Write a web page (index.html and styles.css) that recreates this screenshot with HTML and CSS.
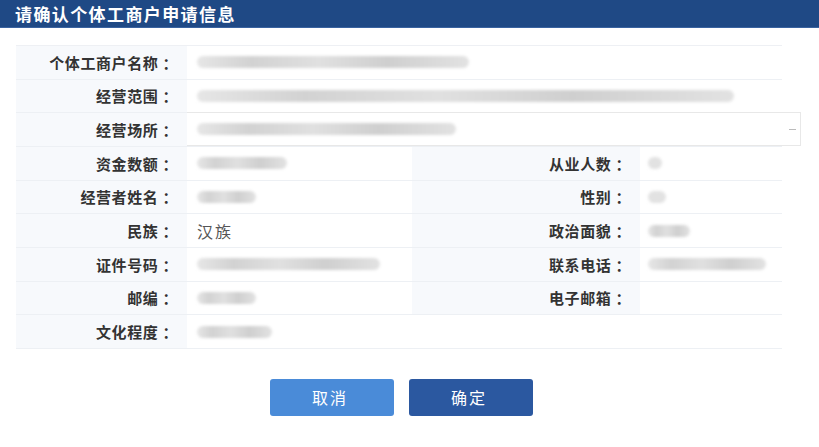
FILE: index.html
```html
<!DOCTYPE html>
<html lang="zh-CN">
<head>
<meta charset="utf-8">
<title>请确认个体工商户申请信息</title>
<link rel="stylesheet" href="styles.css">
</head>
<body>
<div class="header">请确认个体工商户申请信息</div>
<div class="table">
  <div class="row">
    <div class="label">个体工商户名称 ：</div>
    <div class="value wide"><span class="blob" style="width:272px"></span></div>
  </div>
  <div class="row">
    <div class="label">经营范围 ：</div>
    <div class="value wide"><span class="blob" style="width:537px"></span></div>
  </div>
  <div class="row">
    <div class="label">经营场所 ：</div>
    <div class="value wide boxed"><span class="blob" style="width:259px"></span><span class="dash"></span></div>
  </div>
  <div class="row">
    <div class="label">资金数额 ：</div>
    <div class="value"><span class="blob" style="width:90px"></span></div>
    <div class="label label2">从业人数 ：</div>
    <div class="value value2"><span class="blob dot" style="width:14px"></span></div>
  </div>
  <div class="row">
    <div class="label">经营者姓名 ：</div>
    <div class="value"><span class="blob" style="width:59px"></span></div>
    <div class="label label2">性别 ：</div>
    <div class="value value2"><span class="blob dot" style="width:18px"></span></div>
  </div>
  <div class="row">
    <div class="label">民族 ：</div>
    <div class="value"><span class="text">汉族</span></div>
    <div class="label label2">政治面貌 ：</div>
    <div class="value value2"><span class="blob" style="width:42px"></span></div>
  </div>
  <div class="row">
    <div class="label">证件号码 ：</div>
    <div class="value"><span class="blob" style="width:183px"></span></div>
    <div class="label label2">联系电话 ：</div>
    <div class="value value2"><span class="blob" style="width:118px"></span></div>
  </div>
  <div class="row">
    <div class="label">邮编 ：</div>
    <div class="value"><span class="blob" style="width:59px"></span></div>
    <div class="label label2">电子邮箱 ：</div>
    <div class="value value2"></div>
  </div>
  <div class="row">
    <div class="label">文化程度 ：</div>
    <div class="value wide"><span class="blob" style="width:75px"></span></div>
  </div>
</div>
<div class="actions">
  <button class="btn btn-cancel">取消</button>
  <button class="btn btn-ok">确定</button>
</div>
</body>
</html>
```

FILE: styles.css
```css
* { box-sizing: border-box; }
body {
  margin: 0;
  background: #ffffff;
  font-family: "Noto Sans CJK SC", "Noto Sans", sans-serif;
  color: #333;
}
.header {
  height: 28px;
  line-height: 27px;
  background: #1f4985;
  color: #fff;
  font-size: 17px;
  font-weight: bold;
  letter-spacing: 1.4px;
  padding-left: 15px;
  border-bottom: 1px solid #3a63a0;
}
.table {
  margin: 17px 0 0 16px;
  width: 766px;
  border-top: 1px solid #eef0f4;
}
.row {
  display: flex;
  height: 33.67px;
  border-bottom: 1px solid #edf0f4;
}
.label {
  width: 171px;
  flex: none;
  background: #f7f9fc;
  padding-right: 9px;
  font-size: 15px;
  font-weight: bold;
  letter-spacing: 0.6px;
  color: #333;
  display: flex;
  align-items: center;
  justify-content: flex-end;
}
.label2 { width: 228px; }
.value {
  width: 225px;
  flex: none;
  display: flex;
  align-items: center;
  padding-left: 10px;
  font-size: 14px;
  color: #555;
}
.value2 { width: 142px; padding-left: 8px; }
.wide { width: 595px; }
.boxed {
  position: relative;
  width: 614px;
  margin-top: -1px;
  height: calc(100% + 1px);
  border: 1px solid #e8e8e8;
  border-left: none;
  background: #fff;
}
.dash {
  position: absolute;
  right: 4px;
  top: 16px;
  width: 7px;
  height: 1px;
  background: #bbb;
}
.text { letter-spacing: 2px; font-size: 16px; }
.blob {
  display: inline-block;
  height: 12px;
  border-radius: 6px;
  background: linear-gradient(90deg, #e6e6e6 0%, #d2d2d2 20%, #e0e0e0 45%, #cfcfcf 70%, #e2e2e2 100%);
  filter: blur(1.5px);
}
.dot { height: 12px; background: #e2e2e2; }
.actions {
  margin: 30px 0 0 16px;
  width: 766px;
  padding-left: 5px;
  display: flex;
  justify-content: center;
  gap: 15px;
}
.btn {
  width: 124px;
  height: 37px;
  border: none;
  border-radius: 3px;
  color: #fff;
  font-family: "Noto Sans CJK SC", sans-serif;
  font-size: 16px;
  letter-spacing: 2px;
  padding-left: 2px;
}
.btn-cancel { background: #4a8bd8; }
.btn-ok { background: #2b58a0; }
```
